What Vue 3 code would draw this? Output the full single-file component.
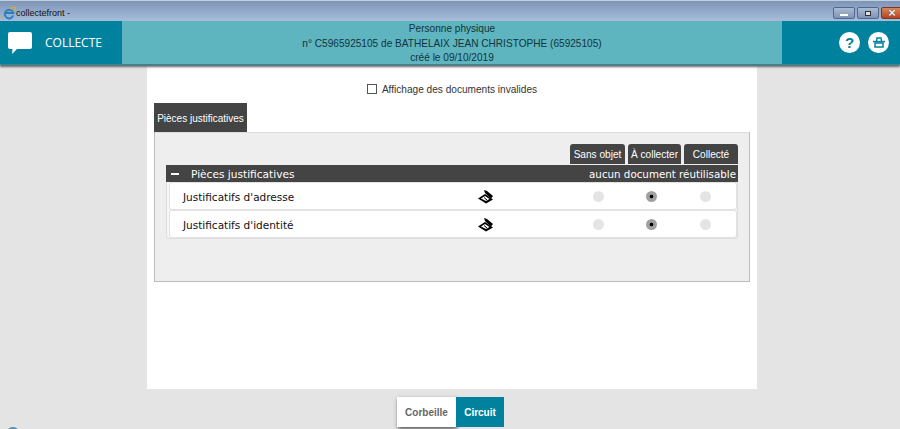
<script setup>
const rows = ["Justificatifs d'adresse", "Justificatifs d'identité"]
const actions = ['Sans objet', 'À collecter', 'Collecté']
</script>

<template>
  <div class="window">
    <div class="titlebar">
      <div class="title">
        <svg class="ie" width="14" height="14" viewBox="0 0 14 14">
          <path d="M1.500 13C0 11 3 5 7 3c3-1.500 6-2.500 6.500-1 .4 1-.5 2-1 3" fill="none" stroke="#e0a92c" stroke-width="1.300"/>
          <path d="M11.200 9.500A4.300 4.300 0 1 1 11.300 7H3.500" fill="none" stroke="#2a7fc4" stroke-width="2"/>
        </svg>
        <span>collectefront -</span>
      </div>
      <div class="controls">
        <span class="ctl"><i class="min"></i></span>
        <span class="ctl"><i class="max"></i></span>
        <span class="ctl close"><b>×</b></span>
      </div>
    </div>

    <header class="header">
      <div class="brand">
        <svg width="24" height="22" viewBox="0 0 24 22">
          <path d="M2 0h20a2 2 0 0 1 2 2v13a2 2 0 0 1-2 2H9l-5 5 .5-5H2a2 2 0 0 1-2-2V2a2 2 0 0 1 2-2z" fill="#fff"/>
        </svg>
        <span>COLLECTE</span>
      </div>
      <div class="info">
        <div>Personne physique</div>
        <div>n° C5965925105 de BATHELAIX JEAN CHRISTOPHE (65925105)</div>
        <div>créé le 09/10/2019</div>
      </div>
      <div class="tools">
        <span class="round q">?</span>
        <span class="round">
          <svg width="12" height="11" viewBox="0 0 12 11">
            <path d="M3.500 4.500 4 1h4l.5 3.500" fill="none" stroke="#00829f" stroke-width="1.400"/>
            <path d="M0 3.800h12v1.500H0z" fill="#00829f"/>
            <path d="M2 6h8v4H2z" fill="none" stroke="#00829f" stroke-width="1.500"/>
          </svg>
        </span>
      </div>
    </header>

    <main class="content">
      <div class="sheet">
        <label class="invalid">
          <span class="check"></span>
          <span>Affichage des documents invalides</span>
        </label>
        <div class="tab">Pièces justificatives</div>
        <section class="panel">
          <div class="actions">
            <button v-for="a in actions" :key="a" class="action">{{ a }}</button>
          </div>
          <div class="bar">
            <span class="minus"></span>
            <span class="bar-title">Pièces justificatives</span>
            <span class="bar-note">aucun document réutilisable</span>
          </div>
          <div class="list">
            <div v-for="r in rows" :key="r" class="row">
              <span class="label">{{ r }}</span>
              <svg class="scan" width="16" height="15" viewBox="0 0 16 15">
                <path d="M6 1l3 1 6 5-2 2.500L9 6 7 4z" fill="#000"/>
                <path d="M0 9.500 7 5l8 5.500-7 4z" fill="#000"/>
                <path d="M3 9.500 7 7l4.500 3-3.500 2z" fill="#fff"/>
                <path d="M6 8.500 9 11" stroke="#000" stroke-width="1"/>
              </svg>
              <span class="radio first"></span>
              <span class="radio on"></span>
              <span class="radio"></span>
            </div>
          </div>
        </section>
      </div>
      <div class="footer">
        <button class="foot white">Corbeille</button>
        <button class="foot teal">Circuit</button>
      </div>
    </main>
    <span class="corner"></span>
  </div>
</template>

<style scoped>
.window {
  position: relative;
  height: 429px;
  overflow: hidden;
  background: #e4e4e4;
  font-family: "Liberation Sans", Arial, sans-serif;
  display: flex;
  flex-direction: column;
}
.titlebar {
  height: 21px;
  flex: none;
  display: flex;
  justify-content: space-between;
  background: linear-gradient(#7f95b8, #a6bddb);
  border-top: 1px solid #c4cfe0;
  box-sizing: border-box;
}
.title {
  display: flex;
  align-items: center;
  gap: 0;
  padding-left: 2px;
  font-size: 9px;
  color: #111;
  padding-top: 4px;
}
.controls {
  display: flex;
  gap: 2px;
  padding-top: 6px;
  margin-right: -3px;
}
.ctl {
  width: 20px;
  height: 10px;
  border: 1px solid #55688a;
  border-radius: 2px;
  background: linear-gradient(#a9bbd4, #7e93b4);
  display: flex;
  align-items: center;
  justify-content: center;
}
.min { width: 8px; height: 2px; background: #fff; margin-top: 3px; }
.max { width: 4px; height: 3px; border: 1px solid #333; background: #dde; }
.close { background: linear-gradient(#d9865c, #b8431e); border-color: #7a3a22; color: #fff; }
.close b { font-size: 13px; line-height: 10px; color: #eee; text-shadow: 0 0 1px #333; }
.header {
  height: 44px;
  flex: none;
  position: relative;
  z-index: 2;
  display: flex;
  background: #5eb4bf;
  border-bottom: 1px solid #2e8a97;
  box-sizing: border-box;
  box-shadow: 0 1.500px 2px #666;
}
.brand {
  width: 122px;
  flex: none;
  background: #00829f;
  color: #fff;
  display: flex;
  align-items: center;
  gap: 13px;
  padding-left: 8px;
  box-sizing: border-box;
  font-family: "Open Sans", sans-serif;
  font-size: 12px;
}
.brand svg { margin-top: 1px; }
.info {
  flex: 1;
  text-align: center;
  color: #12343c;
  font-size: 10.100px;
  line-height: 14.500px;
  padding-top: 1px;
}
.tools {
  width: 118px;
  flex: none;
  background: #00829f;
  display: flex;
  align-items: center;
  justify-content: flex-end;
  gap: 8px;
  padding-right: 11px;
  box-sizing: border-box;
}
.round {
  width: 21px;
  height: 21px;
  border-radius: 50%;
  background: #fff;
  color: #00829f;
  display: flex;
  align-items: center;
  justify-content: center;
  font-weight: 700;
  font-size: 15px;
}
.content {
  flex: 1;
  display: flex;
  flex-direction: column;
  align-items: center;
}
.sheet {
  width: 610px;
  height: 324px;
  margin-left: 4px;
  background: #fff;
  padding: 0 7px;
  box-sizing: border-box;
}
.invalid {
  display: flex;
  align-items: center;
  justify-content: center;
  gap: 5px;
  height: 20px;
  margin-top: 14px;
  margin-bottom: 4px;
  font-size: 10.100px;
  color: #333;
}
.check {
  width: 8px;
  height: 8px;
  border: 1px solid #555;
  background: #fff;
}
.tab {
  width: 93px;
  height: 29px;
  background: #444;
  color: #fff;
  font-size: 10px;
  line-height: 31px;
  text-align: center;
}
.panel {
  width: 596px;
  height: 150px;
  background: #eee;
  border: 1px solid #bbb;
  border-top-color: #ddd;
  box-sizing: border-box;
  padding: 11px 11px 0 11px;
}
.actions {
  display: flex;
  justify-content: flex-end;
  gap: 3px;
  height: 21px;
}
.action {
  height: 20px;
  padding: 0;
  border: none;
  border-radius: 3px 3px 0 0;
  background: #444;
  color: #fff;
  font: 10.100px "Liberation Sans", Arial, sans-serif;
}
.action:nth-child(1) { width: 55px; }
.action:nth-child(2) { width: 53px; }
.action:nth-child(3) { width: 54px; }
.bar {
  height: 17px;
  background: #444;
  color: #fff;
  font-family: "DejaVu Sans", sans-serif;
  font-size: 10.600px;
  display: flex;
  align-items: center;
  padding: 0 2px 0 5px;
  white-space: nowrap;
}
.minus { width: 8px; height: 2px; background: #fff; margin-right: 12px; }
.bar-title { flex: 1; }
.bar-note { font-size: 10.300px; }
.list {
  padding: 1px 1px 0 3px;
  border: 1px solid #ddd;
  border-top: none;
  border-radius: 0 0 3px 3px;
  background: #f7f7f7;
  box-sizing: border-box;
  height: 57px;
}
.row {
  height: 26px;
  background: #fff;
  border-radius: 2px;
  margin-bottom: 2px;
  box-shadow: 0 0 0 1px #e2e2e2;
  display: grid;
  grid-template-columns: 308px 16px 99px 53px 54px 10px;
  align-items: center;
  font-family: "DejaVu Sans", sans-serif;
  font-size: 10.500px;
  color: #111;
}
.label { padding: 1px 0 0 13px; white-space: nowrap; }
.radio {
  width: 11px;
  height: 11px;
  border-radius: 50%;
  background: #e4e4e4;
}
.first { grid-column: 4; }
.radio.on {
  background: radial-gradient(circle, #000 0 1.500px, #a0a0a0 2.200px);
}
.footer {
  display: flex;
  margin-top: 8px;
  height: 30px;
  margin-right: -1px;
}
.foot {
  height: 30px;
  padding: 0;
  border: none;
  font: 700 10px "Liberation Sans", Arial, sans-serif;
}
.white { width: 59px; background: #fff; color: #666; box-shadow: 1px 2px 4px #555; }
.teal { width: 48px; background: #00829f; color: #fff; position: relative; }
.corner {
  position: absolute;
  left: 6px;
  bottom: -12px;
  width: 14px;
  height: 14px;
  border: 2px solid #5a8bb0;
  border-radius: 50%;
  box-sizing: border-box;
}
</style>

<style>
html, body { margin: 0; overflow: hidden; }
</style>
